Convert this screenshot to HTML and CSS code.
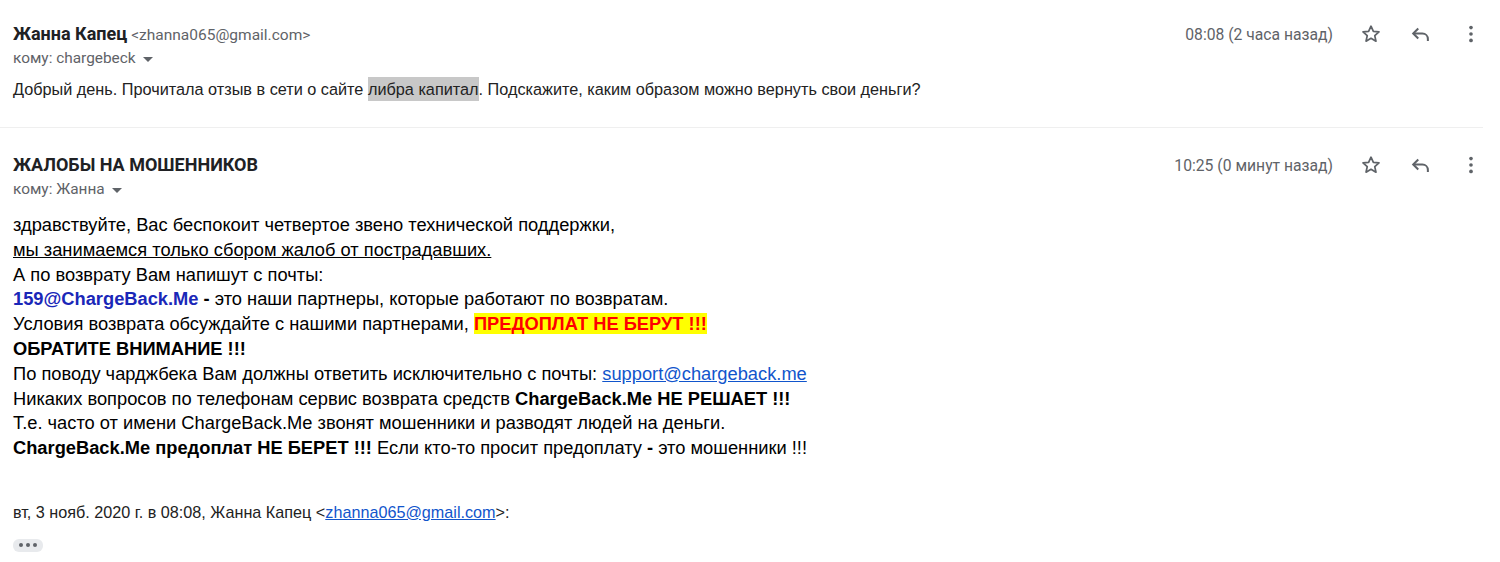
FILE: index.html
```html
<!DOCTYPE html>
<html lang="ru">
<head>
<meta charset="utf-8">
<link rel="stylesheet" href="styles.css">
</head>
<body>
<div class="thread">
  <div class="msg msg-first">
    <div class="msg-head">
      <div class="who">
        <div class="from"><span class="name">Жанна Капец</span> <span class="addr">&lt;zhanna065@gmail.com&gt;</span></div>
        <div class="to">кому: chargebeck <span class="caret"></span></div>
      </div>
      <div class="meta">
        <span class="time">08:08 (2 часа назад)</span>
        <span class="ic"><svg viewBox="0 0 24 24" width="22" height="22"><path d="M12 3.5l2.6 5.6 6.1.6-4.6 4.1 1.3 6-5.4-3.1-5.4 3.1 1.3-6-4.6-4.1 6.1-.6z" fill="none" stroke="#5f6368" stroke-width="1.9" stroke-linejoin="round"/></svg></span>
        <span class="ic"><svg viewBox="0 0 24 24" width="22" height="22"><path d="M9 6L3.5 11.5 9 17" fill="none" stroke="#5f6368" stroke-width="2.2"/><path d="M4 11.5h9.5c3.5 0 6 2.5 6 6v2" fill="none" stroke="#5f6368" stroke-width="2.2"/></svg></span>
        <span class="ic"><svg viewBox="0 0 24 24" width="22" height="22"><circle cx="12" cy="5" r="2" fill="#5f6368"/><circle cx="12" cy="12" r="2" fill="#5f6368"/><circle cx="12" cy="19" r="2" fill="#5f6368"/></svg></span>
      </div>
    </div>
    <div class="text1">Добрый день. Прочитала отзыв в сети о сайте <span class="hl-gray">либра капитал</span>. Подскажите, каким образом можно вернуть свои деньги?</div>
  </div>

  <div class="msg msg-second">
    <div class="msg-head">
      <div class="who">
        <div class="from"><span class="name">ЖАЛОБЫ НА МОШЕННИКОВ</span></div>
        <div class="to">кому: Жанна <span class="caret"></span></div>
      </div>
      <div class="meta">
        <span class="time">10:25 (0 минут назад)</span>
        <span class="ic"><svg viewBox="0 0 24 24" width="22" height="22"><path d="M12 3.5l2.6 5.6 6.1.6-4.6 4.1 1.3 6-5.4-3.1-5.4 3.1 1.3-6-4.6-4.1 6.1-.6z" fill="none" stroke="#5f6368" stroke-width="1.9" stroke-linejoin="round"/></svg></span>
        <span class="ic"><svg viewBox="0 0 24 24" width="22" height="22"><path d="M9 6L3.5 11.5 9 17" fill="none" stroke="#5f6368" stroke-width="2.2"/><path d="M4 11.5h9.5c3.5 0 6 2.5 6 6v2" fill="none" stroke="#5f6368" stroke-width="2.2"/></svg></span>
        <span class="ic"><svg viewBox="0 0 24 24" width="22" height="22"><circle cx="12" cy="5" r="2" fill="#5f6368"/><circle cx="12" cy="12" r="2" fill="#5f6368"/><circle cx="12" cy="19" r="2" fill="#5f6368"/></svg></span>
      </div>
    </div>
    <div class="text2">
      <div>здравствуйте, Вас беспокоит четвертое звено технической поддержки,</div>
      <div><span class="u">мы занимаемся только сбором жалоб от пострадавших.</span></div>
      <div>А по возврату Вам напишут с почты:</div>
      <div><b class="blue">159@ChargeBack.Me</b> <b>-</b> это наши партнеры, которые работают по возвратам.</div>
      <div>Условия возврата обсуждайте с нашими партнерами, <b class="warn">ПРЕДОПЛАТ НЕ БЕРУТ !!!</b></div>
      <div><b>ОБРАТИТЕ ВНИМАНИЕ !!!</b></div>
      <div>По поводу чарджбека Вам должны ответить исключительно с почты: <a class="link">support@chargeback.me</a></div>
      <div>Никаких вопросов по телефонам сервис возврата средств <b>ChargeBack.Me НЕ РЕШАЕТ !!!</b></div>
      <div>Т.е. часто от имени ChargeBack.Me звонят мошенники и разводят людей на деньги.</div>
      <div><b>ChargeBack.Me предоплат НЕ БЕРЕТ !!!</b> Если кто-то просит предоплату <b>-</b> это мошенники !!!</div>
    </div>
    <div class="quote-line">вт, 3 нояб. 2020 г. в 08:08, Жанна Капец &lt;<a class="link">zhanna065@gmail.com</a>&gt;:</div>
    <div class="more"><span class="dots"><i></i><i></i><i></i></span></div>
  </div>
</div>
</body>
</html>
```
FILE: styles.css
```css
html, body {
  margin: 0;
  padding: 0;
  background: #fff;
}
body {
  font-family: "Liberation Sans", Arial, sans-serif;
  color: #222;
  width: 1500px;
  height: 562px;
  overflow: hidden;
}
.thread {
  width: 1483px;
}
.msg {
  padding-left: 13px;
}
.msg-first {
  padding-top: 23px;
  padding-bottom: 27px;
  border-bottom: 1px solid #efefef;
}
.msg-second {
  padding-top: 26px;
}
.msg-head {
  display: flex;
  justify-content: space-between;
  align-items: flex-start;
}
.from {
  font-family: Roboto, "Liberation Sans", sans-serif;
  line-height: 22px;
  height: 22px;
  white-space: nowrap;
}
.name {
  font-weight: 700;
  font-size: 18px;
  color: #202124;
}
.addr {
  font-size: 15.5px;
  color: #5f6368;
}
.to {
  font-family: Roboto, "Liberation Sans", sans-serif;
  font-size: 15.4px;
  color: #5f6368;
  line-height: 20px;
  margin-top: 3px;
  display: flex;
  align-items: center;
  gap: 7px;
}
.caret {
  width: 0;
  height: 0;
  border-left: 5px solid transparent;
  border-right: 5px solid transparent;
  border-top: 5px solid #5f6368;
  margin-top: 2px;
}
.meta {
  display: flex;
  align-items: center;
  height: 22px;
}
.time {
  font-family: Roboto, "Liberation Sans", sans-serif;
  font-size: 15.7px;
  color: #5f6368;
  margin-right: 26px;
}
.ic {
  width: 24px;
  height: 24px;
  display: flex;
  align-items: center;
  justify-content: center;
}
.ic + .ic {
  margin-left: 26px;
}
.text1 {
  font-size: 16.25px;
  line-height: 22px;
  margin-top: 10px;
  color: #222;
}
.hl-gray {
  background: #c8c8c8;
  padding: 3px 0;
}
.text2 {
  margin-top: 14px;
  font-size: 18.3px;
  line-height: 24.8px;
  color: #000;
}
.u {
  text-decoration: underline;
}
.blue {
  color: #1a27b8;
}
.warn {
  color: #ff0000;
  background: #ffff00;
}
.link {
  color: #1155cc;
  text-decoration: underline;
}
.quote-line {
  margin-top: 40px;
  font-size: 16.2px;
  line-height: 22px;
  color: #222;
}
.more {
  margin-top: 16px;
  display: flex;
}
.dots {
  display: flex;
  align-items: center;
  justify-content: center;
  gap: 3px;
  width: 30px;
  height: 13px;
  background: #e8eaed;
  border-radius: 6px;
}
.dots i {
  display: block;
  width: 4px;
  height: 4px;
  border-radius: 50%;
  background: #5f6368;
}
```
